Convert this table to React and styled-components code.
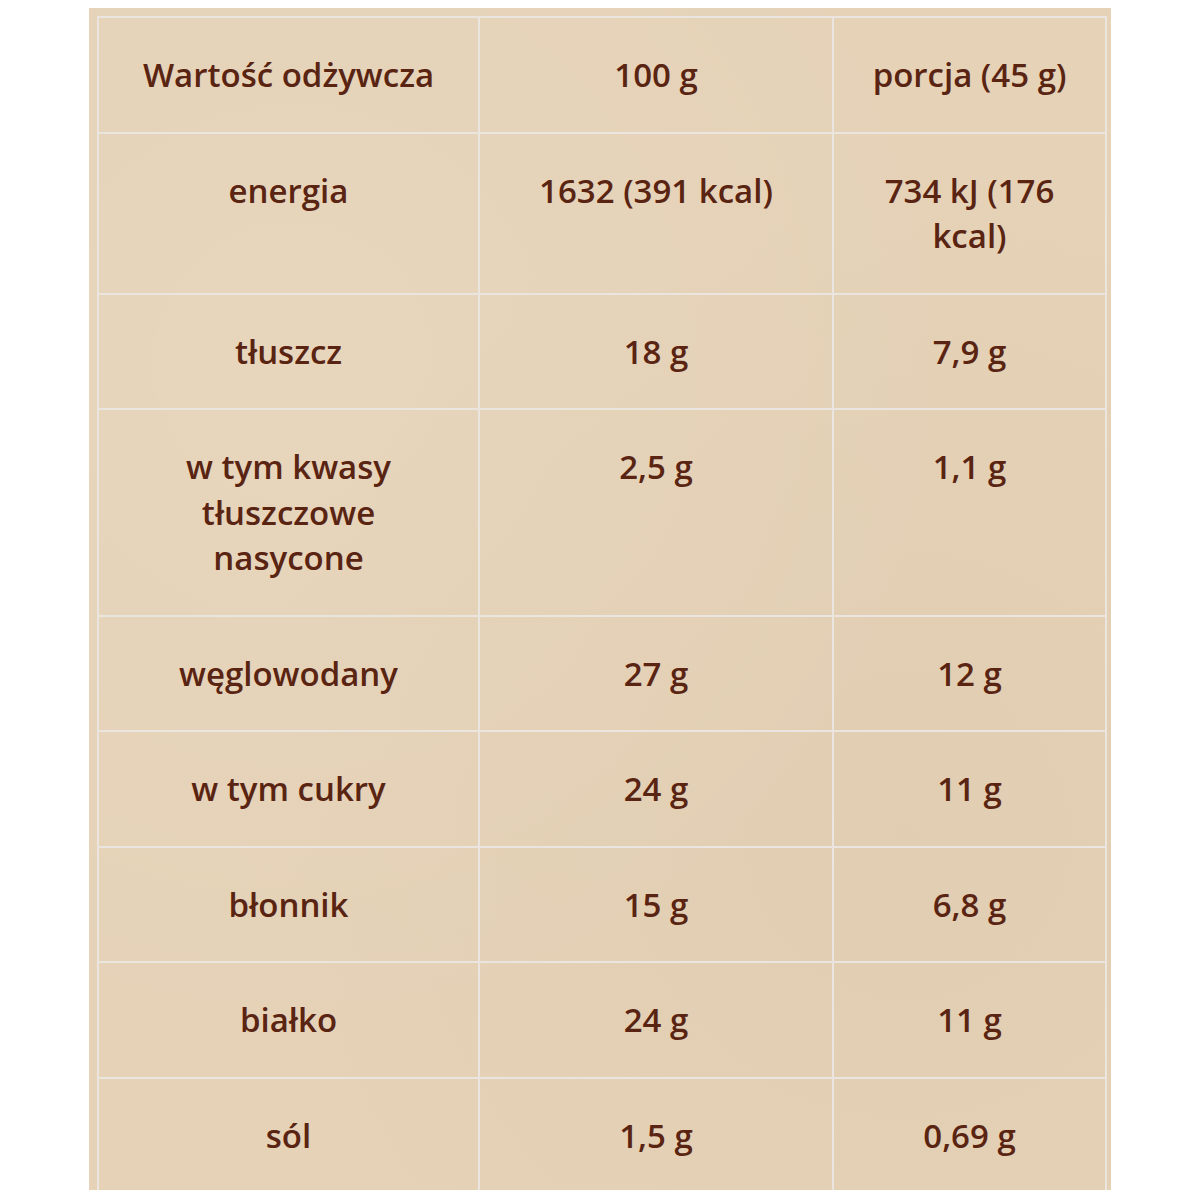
import styled, { createGlobalStyle } from "styled-components"

const GlobalStyle = createGlobalStyle`
  body {
    margin: 0;
    background: #ffffff;
    font-family: "Open Sans", "Noto Sans", sans-serif;
  }
`

const rows = [
  ["energia", "1632 (391 kcal)", "734 kJ (176 kcal)"],
  ["tłuszcz", "18 g", "7,9 g"],
  ["w tym kwasy tłuszczowe nasycone", "2,5 g", "1,1 g"],
  ["węglowodany", "27 g", "12 g"],
  ["w tym cukry", "24 g", "11 g"],
  ["błonnik", "15 g", "6,8 g"],
  ["białko", "24 g", "11 g"],
  ["sól", "1,5 g", "0,69 g"],
]

const App = () => {
  return (
    <Page>
      <GlobalStyle />
      <Paper>
        <Table>
          <colgroup>
            <col style={{ width: 381 }} />
            <col style={{ width: 354 }} />
            <col style={{ width: 273 }} />
          </colgroup>
          <thead>
            <tr>
              <Cell as="th">Wartość odżywcza</Cell>
              <Cell as="th">100 g</Cell>
              <Cell as="th">porcja (45 g)</Cell>
            </tr>
          </thead>
          <tbody>
            {rows.map((r) => (
              <tr key={r[0]}>
                <Cell>{r[0]}</Cell>
                <Cell>{r[1]}</Cell>
                <Cell>{r[2]}</Cell>
              </tr>
            ))}
          </tbody>
        </Table>
      </Paper>
    </Page>
  )
}
export default App

const Page = styled.div`
  padding-top: 8px;
  display: flex;
  justify-content: center;
`
const Paper = styled.div`
  width: 1022px;
  height: 1182px;
  box-sizing: border-box;
  padding: 8px 6px 0 8px;
  overflow: hidden;
  background-color: #e5d2b7;
  background-image:
    radial-gradient(ellipse at 20% 30%, rgba(255, 255, 255, 0.08), transparent 60%),
    radial-gradient(ellipse at 80% 70%, rgba(170, 140, 100, 0.06), transparent 60%);
`
const Table = styled.table`
  width: 1008px;
  border-collapse: collapse;
  table-layout: fixed;
`
const Cell = styled.td`
  border: 2px solid #ebe5e0;
  padding: 34px 30px 34px;
  vertical-align: top;
  text-align: center;
  font-size: 33px;
  font-weight: 600;
  line-height: 45.5px;
  color: #5a2412;
`
